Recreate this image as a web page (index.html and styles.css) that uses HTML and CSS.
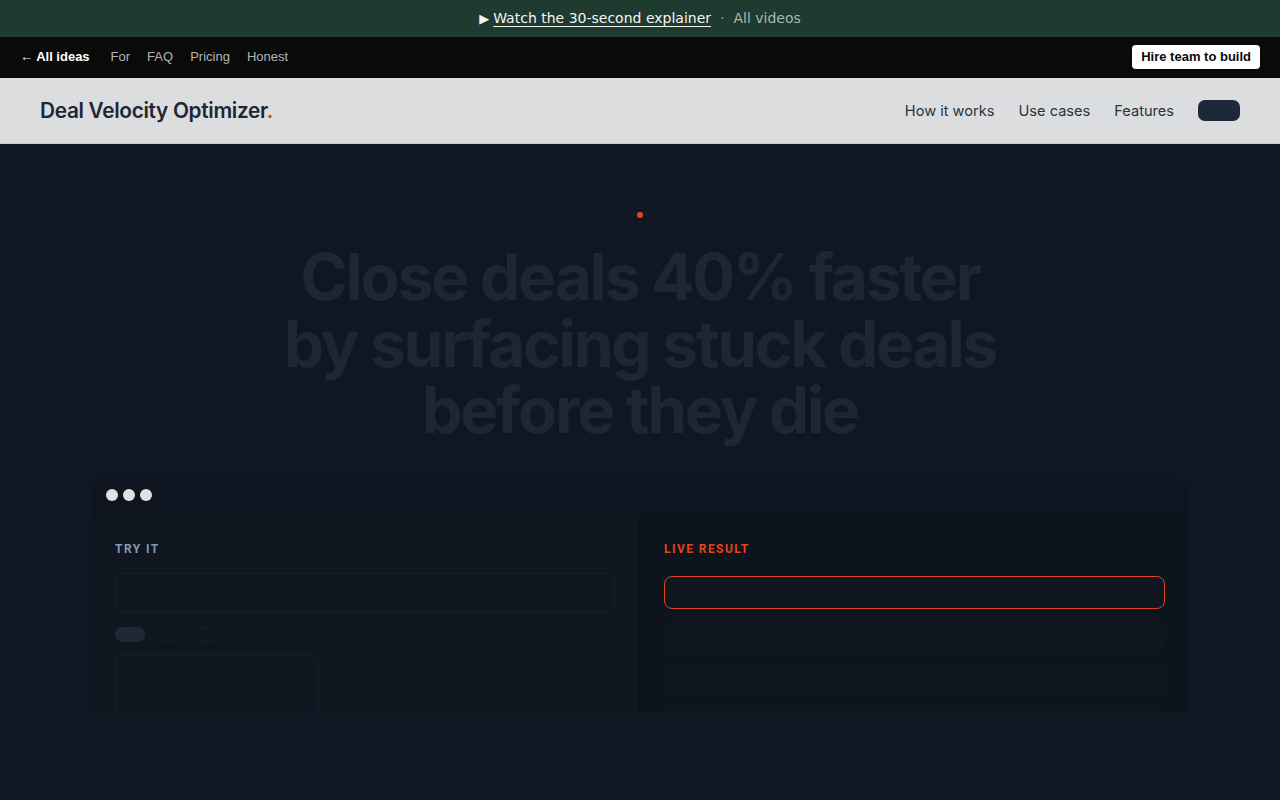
FILE: index.html
```html
<!DOCTYPE html>
<html lang="en">
<head>
<meta charset="utf-8">
<title>Deal Velocity Optimizer</title>
<link rel="stylesheet" href="styles.css">
</head>
<body>
<div class="promo">
  <span class="promo-play">▶</span>
  <a class="promo-link" href="#">Watch the 30-second explainer</a>
  <span class="promo-sep">·</span>
  <a class="promo-all" href="#">All videos</a>
</div>
<nav class="topnav">
  <div class="topnav-links">
    <a class="topnav-back" href="#">← All ideas</a>
    <a href="#">For</a>
    <a href="#">FAQ</a>
    <a href="#">Pricing</a>
    <a href="#">Honest</a>
  </div>
  <a class="hire-btn" href="#">Hire team to build</a>
</nav>
<header class="site-header">
  <div class="brand">Deal Velocity Optimizer<span class="brand-dot">.</span></div>
  <div class="header-nav">
    <a href="#">How it works</a>
    <a href="#">Use cases</a>
    <a href="#">Features</a>
    <span class="header-cta"></span>
  </div>
</header>
<main class="hero">
  <div class="badge"><span class="badge-dot"></span></div>
  <h1 class="headline">Close deals 40% faster<br>by surfacing stuck deals<br>before they die</h1>
  <section class="demo">
    <div class="demo-bar">
      <span class="demo-dot"></span><span class="demo-dot"></span><span class="demo-dot"></span>
    </div>
    <div class="demo-body">
      <div class="demo-col demo-input">
        <div class="demo-label">TRY IT</div>
        <div class="field"></div>
        <div class="chips">
          <span class="chip chip-on"></span>
          <span class="chip"></span>
          <span class="chip"></span>
        </div>
        <div class="panel"></div>
      </div>
      <div class="demo-col demo-output">
        <div class="demo-label demo-label-live">LIVE RESULT</div>
        <div class="result result-main"></div>
        <div class="result result-a"></div>
        <div class="result result-b"></div>
        <div class="result result-c"></div>
      </div>
    </div>
  </section>
</main>
</body>
</html>
```
FILE: styles.css
```css
* { box-sizing: border-box; }
html, body { margin: 0; padding: 0; }
body {
  background: #0f1722;
  min-height: 800px;
  font-family: "Inter", "Liberation Sans", sans-serif;
}
a { text-decoration: none; color: inherit; }

.promo {
  height: 37px;
  background: #1f3a2f;
  display: flex;
  align-items: center;
  justify-content: center;
  gap: 6px;
  font-family: "DejaVu Sans", sans-serif;
  font-size: 14px;
  color: #f3f5f4;
  padding-bottom: 1px;
}
.promo-play { font-size: 13px; margin-right: -2px; }
.promo-link { text-decoration: underline; text-underline-offset: 3px; color: #f3f5f4; }
.promo-sep { color: #8ea197; margin: 0 3px; }
.promo-all { color: #a9b8b0; }

.topnav {
  height: 41px;
  background: #0a0a0a;
  display: flex;
  align-items: center;
  justify-content: space-between;
  padding: 0 20px 2px 20px;
  font-family: "Liberation Sans", Arial, sans-serif;
  font-size: 13px;
}
.topnav-links { display: flex; align-items: center; gap: 17px; color: #b4b4b4; }
.topnav-back { color: #ffffff; font-weight: 700; margin-right: 4px; }
.hire-btn {
  background: #ffffff;
  color: #0a0a0a;
  font-weight: 700;
  border-radius: 4px;
  height: 24px;
  line-height: 24px;
  padding: 0 9px 0 9px;
  margin-top: 1px;
}

.site-header {
  height: 66px;
  background: #dcdddf;
  border-bottom: 1px solid #c8cacd;
  display: flex;
  align-items: center;
  justify-content: space-between;
  padding: 0 40px;
}
.brand {
  font-size: 20.8px;
  font-weight: 600;
  color: #1e2733;
  letter-spacing: -0.015em;
}
.brand-dot { color: #e8471c; }
.header-nav { display: flex; align-items: center; gap: 24px; font-size: 14.6px; color: #2a3340; }
.header-cta {
  display: block;
  width: 42px;
  height: 21px;
  border-radius: 7px;
  background: #1e2838;
}

.hero {
  height: 568px;
  overflow: hidden;
  display: flex;
  flex-direction: column;
  align-items: center;
  padding-top: 68px;
}
.badge {
  width: 40px;
  height: 19px;
  border-radius: 10px;
  background: rgba(255, 255, 255, 0.01);
  display: flex;
  align-items: center;
  justify-content: center;
}
.badge-dot {
  width: 6px;
  height: 6px;
  border-radius: 50%;
  background: #e8441a;
}
.headline {
  margin: 26px 0 0;
  font-size: 64px;
  line-height: 66.5px;
  font-weight: 700;
  letter-spacing: -0.035em;
  color: #1d2632;
  text-align: center;
}

.demo {
  position: relative;
  margin-top: 33px;
  width: 1100px;
  flex-shrink: 0;
  background: #0e1520;
  border: 1px solid rgba(255, 255, 255, 0.02);
  border-radius: 16px;
  box-shadow: 0 0 50px 20px rgba(255, 255, 255, 0.006);
}
.demo::before {
  content: "";
  position: absolute;
  inset: -26px -38px -40px -40px;
  border-radius: 44px;
  background: rgba(255, 255, 255, 0.004);
  z-index: -1;
}
.demo-bar {
  height: 36px;
  display: flex;
  align-items: center;
  gap: 5px;
  padding-left: 15px;
  border-bottom: 1px solid rgba(0, 0, 0, 0.18);
}
.demo-dot {
  width: 12px;
  height: 12px;
  border-radius: 50%;
  background: #e1e1e3;
}
.demo-body {
  display: grid;
  grid-template-columns: 1fr 1fr;
  min-height: 320px;
}
.demo-col { padding: 27px 24px 24px; }
.demo-input { background: #0f1620; border-right: 1px solid rgba(0, 0, 0, 0.2); }
.demo-output { background: #0d141d; }
.demo-label {
  font-family: "Roboto", "Liberation Sans", sans-serif;
  font-size: 12px;
  line-height: 16px;
  font-weight: 700;
  letter-spacing: 0.12em;
  color: #7f9ab6;
}
.demo-label-live { color: #e0441c; }

.field {
  margin-top: 16px;
  height: 40px;
  border: 1px solid #161e29;
  border-radius: 6px;
  background: #0f1620;
}
.chips { display: flex; gap: 8px; margin-top: 14px; }
.chip {
  width: 30px;
  height: 15px;
  border-radius: 8px;
  border: 1px solid #151d28;
}
.chip-on { background: #1f2935; border-color: #1f2935; }
.panel {
  margin-top: 12px;
  width: 204px;
  height: 120px;
  border: 1px solid #161e29;
  border-radius: 8px;
}

.result {
  border-radius: 8px;
  background: #0f1620;
}
.result-main {
  margin-top: 19px;
  height: 33px;
  border: 1.5px solid #e0441c;
}
.result-a { margin-top: 13px; height: 30px; }
.result-b { margin-top: 12px; height: 32px; }
.result-c { margin-top: 11px; height: 32px; }
```
